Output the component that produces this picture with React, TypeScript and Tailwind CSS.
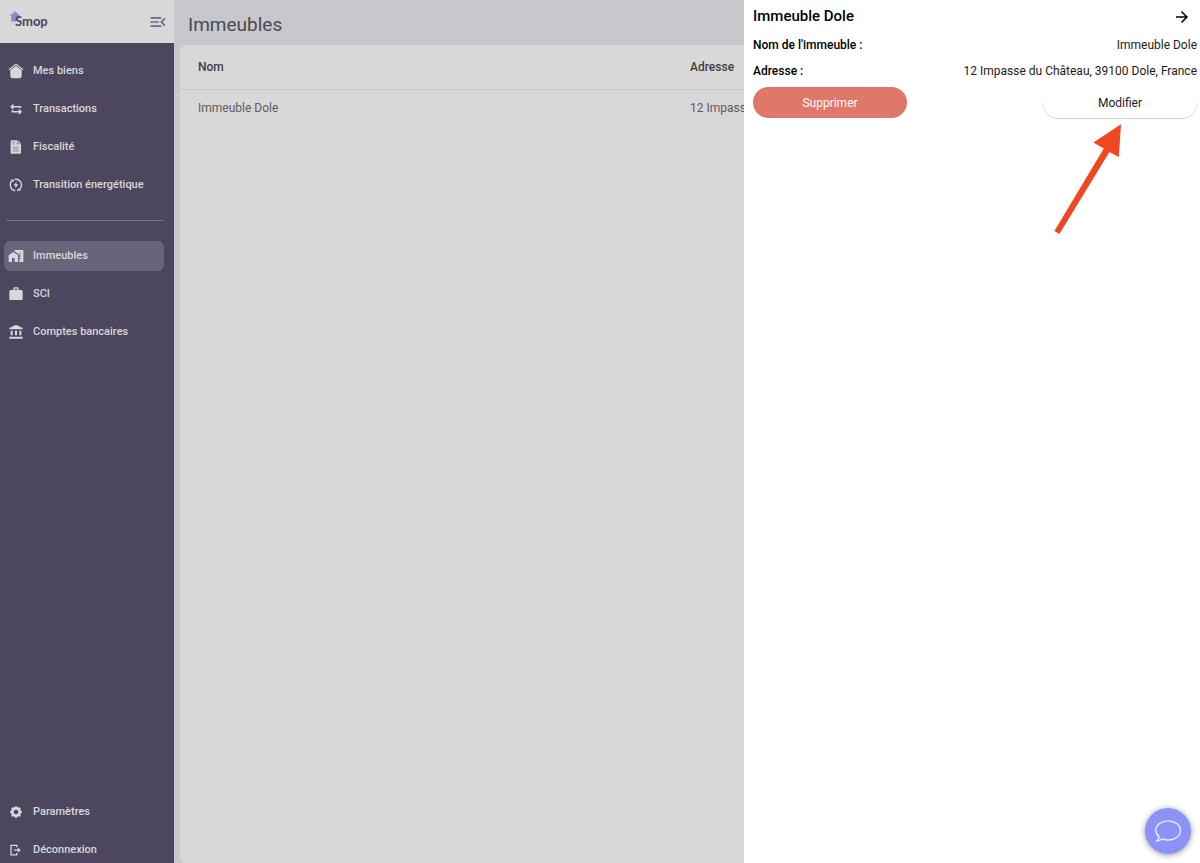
import React from 'react';
import {
  MdAccountBalance,
  MdArrowForward,
  MdMapsHomeWork,
  MdMenuOpen,
  MdWork,
} from 'react-icons/md';

const HomeIcon: React.FC = () => (
  <svg viewBox="0 0 16 16" className="size-4" fill="none" stroke="currentColor" aria-hidden="true">
    <path d="M.9 6.8 L8 1.3 L15.1 6.8" strokeWidth="1.1" />
    <path d="M2.3 7.2 L8 2.9 L13.7 7.2 V13 Q13.7 15.2 11.5 15.2 H4.5 Q2.3 15.2 2.3 13 Z" fill="currentColor" stroke="none" />
  </svg>
);

const TransferIcon: React.FC = () => (
  <svg viewBox="0 0 16 16" className="size-4" fill="none" stroke="currentColor" strokeWidth="1.4" aria-hidden="true">
    <path d="M12.4 7 V5.8 H3.6 M5.4 3.6 L3.2 5.8 L5.4 8" />
    <path d="M4.4 9 V10.8 H12.8 M10.8 8.6 L13 10.8 L10.8 13" />
  </svg>
);

const InvoiceIcon: React.FC = () => (
  <svg viewBox="0 0 16 16" className="size-4" aria-hidden="true">
    <path d="M3.4 1.2 H9.6 L13 4.6 V14 Q13 14.8 12.2 14.8 H3.4 Q2.6 14.8 2.6 14 V2 Q2.6 1.2 3.4 1.2 Z" fill="currentColor" />
    <path d="M9.4 1.4 V4.8 H12.8" fill="none" stroke="#4d465f" strokeWidth=".6" />
    <path d="M4.2 3.3 H7.2 M4.2 5 H6.2 M4.8 8.3 H10.8 M4.8 10.2 H10.8 M4.8 12.1 H10.8" stroke="#4d465f" strokeWidth=".5" />
  </svg>
);

const EnergyIcon: React.FC = () => (
  <svg viewBox="0 0 16 16" className="size-4" fill="none" stroke="currentColor" strokeWidth="1.4" aria-hidden="true">
    <path d="M6.6 2.4 A5.7 5.7 0 0 1 9 13.6 M7.2 13.7 A5.7 5.7 0 0 1 5 3.2" />
    <path d="M3.4 2.9 H5.4 V4.9 M10.8 11.4 V13.2 H12.6" strokeWidth="1" />
    <path d="M8.5 4.7 L5.6 8.7 H7.6 L7.1 11.4 L10.4 7.3 H8.3 Z" fill="currentColor" stroke="none" />
  </svg>
);

const GearIcon: React.FC = () => (
  <svg viewBox="0 0 16 16" className="size-4" fill="none" stroke="currentColor" aria-hidden="true">
    <circle cx="8" cy="8" r="3.6" strokeWidth="2.6" />
    <path
      d="M8 2.2 V4 M8 12 V13.8 M2.2 8 H4 M12 8 H13.8 M3.9 3.9 L5.2 5.2 M10.8 10.8 L12.1 12.1 M12.1 3.9 L10.8 5.2 M5.2 10.8 L3.9 12.1"
      strokeWidth="2.4"
    />
  </svg>
);

const LogoutIcon: React.FC = () => (
  <svg viewBox="0 0 16 16" className="size-4" fill="none" stroke="currentColor" strokeWidth="1.3" aria-hidden="true">
    <path d="M8.8 5.2 V3.4 H3 V12.8 H8.8 V11" />
    <path d="M6 8.1 H11.4" />
    <path d="M10 6 L12.4 8.1 L10 10.2 Z" fill="currentColor" strokeWidth=".6" />
  </svg>
);

const Logo: React.FC = () => (
  <a href="#accueil" aria-label="Smop" className="block">
    <svg viewBox="0 0 40 22" className="h-[22px] w-10">
      <path d="M1.2 4.4 L5 1.4 L9 4.4 V8 H6 V10.4 H1.2 Z" fill="#858ad6" />
      <path d="M.2 4.6 L4.8 .8 L9.4 4.6" fill="none" stroke="#77779a" strokeWidth=".9" />
      <text x="5" y="15" fontFamily="Lato, sans-serif" fontWeight="700" fontSize="13" fill="#4b4461">
        Smop
      </text>
      <circle cx="26.4" cy="13.2" r=".9" fill="#3f9b7c" />
    </svg>
  </a>
);

type Item = { label: string; href: string; icon: React.ReactNode; active?: boolean };

const mainItems: Item[] = [
  { label: 'Mes biens', href: '#biens', icon: <HomeIcon /> },
  { label: 'Transactions', href: '#transactions', icon: <TransferIcon /> },
  { label: 'Fiscalité', href: '#fiscalite', icon: <InvoiceIcon /> },
  { label: 'Transition énergétique', href: '#energie', icon: <EnergyIcon /> },
];

const assetItems: Item[] = [
  { label: 'Immeubles', href: '#immeubles', icon: <MdMapsHomeWork size={16} />, active: true },
  { label: 'SCI', href: '#sci', icon: <MdWork size={16} /> },
  { label: 'Comptes bancaires', href: '#comptes', icon: <MdAccountBalance size={16} /> },
];

const footerItems: Item[] = [
  { label: 'Paramètres', href: '#parametres', icon: <GearIcon /> },
  { label: 'Déconnexion', href: '#deconnexion', icon: <LogoutIcon /> },
];

const NavList: React.FC<{ items: Item[] }> = ({ items }) => (
  <ul className="flex flex-col gap-2 pl-1 pr-2.5">
    {items.map((item) => (
      <li key={item.label}>
        <a
          href={item.href}
          className={`flex h-[30px] items-center gap-[9px] rounded-md pl-1 text-[11px] leading-4 font-medium whitespace-nowrap ${
            item.active ? 'bg-[#6a647a]' : ''
          }`}
        >
          <span className="flex w-4 justify-center">{item.icon}</span>
          {item.label}
        </a>
      </li>
    ))}
  </ul>
);

const Sidebar: React.FC = () => (
  <aside className="flex w-[174px] shrink-0 flex-col bg-[#4d465f] text-[#d8d8d8]">
    <div className="flex h-[43px] items-center justify-between bg-[#d8d8d8] pl-2.5 pr-1.5">
      <Logo />
      <button type="button" aria-label="Réduire le menu" className="text-[#6f6a80]">
        <MdMenuOpen size={20} />
      </button>
    </div>
    <nav className="flex flex-1 flex-col pt-[13px]">
      <NavList items={mainItems} />
      <hr className="my-5 ml-1.5 mr-2.5 border-[#797388]" />
      <NavList items={assetItems} />
      <div className="mt-auto -mb-0.5">
        <NavList items={footerItems} />
      </div>
    </nav>
  </aside>
);

const rows = [{ nom: 'Immeuble Dole', adresse: '12 Impasse du Château, 39100 Dole, France' }];

const Buildings: React.FC = () => (
  <main className="flex min-w-0 flex-1 flex-col overflow-hidden bg-[#c8c7cd] pl-1.5">
    <h1 className="flex h-[45px] items-center pl-2 pt-1.5 text-[19px] text-[#4a4a4d]">Immeubles</h1>
    <div className="flex-1 rounded-l-md bg-[#d8d8d8]">
      <table className="w-full table-fixed text-left text-xs">
        <thead>
          <tr className="h-11 border-b border-[#c8c8c9] text-[#404040]">
            <th className="w-[492px] pl-[18px] font-medium">Nom</th>
            <th className="pl-[18px] font-medium">Adresse</th>
          </tr>
        </thead>
        <tbody>
          {rows.map((row) => (
            <tr key={row.nom} className="h-[38px] text-[#5c5c5c]">
              <td className="pl-[18px]">{row.nom}</td>
              <td className="overflow-hidden pl-[18px] whitespace-nowrap">{row.adresse}</td>
            </tr>
          ))}
        </tbody>
      </table>
    </div>
  </main>
);

const DetailPanel: React.FC = () => (
  <section className="relative w-[38%] shrink-0 bg-white pl-[9px] pr-[3px] text-xs text-[#1c1c1c]">
    <div className="flex h-[34px] items-center justify-between pr-1.5 text-black">
      <h2 className="text-[15px] font-medium">Immeuble Dole</h2>
      <button type="button" aria-label="Fermer">
        <MdArrowForward size={18} />
      </button>
    </div>
    <dl className="flex flex-col">
      <div className="flex h-[22px] items-center justify-between">
        <dt className="font-medium text-black">Nom de l'immeuble :</dt>
        <dd>Immeuble Dole</dd>
      </div>
      <div className="flex h-[30px] items-center justify-between">
        <dt className="font-medium text-black">Adresse :</dt>
        <dd>12 Impasse du Château, 39100 Dole, France</dd>
      </div>
    </dl>
    <div className="mt-px flex justify-between">
      <button type="button" className="h-[31px] w-[154px] rounded-full bg-[#df776a] text-white">
        Supprimer
      </button>
      <button
        type="button"
        className="h-[31px] w-[154px] rounded-full bg-white shadow-[0_1px_1px_rgba(0,0,0,0.18)]"
      >
        Modifier
      </button>
    </div>
    {/* Pointer to the edit button */}
    <svg viewBox="0 0 70 114" className="absolute right-[77px] top-[122px] h-[114px] w-[70px]" aria-hidden="true">
      <path d="M68 2.2 L65.8 35 L56.4 30 L6.4 112 L1.4 109 L50.8 26.6 L40.4 20.4 Z" fill="#f04720" />
    </svg>
  </section>
);

const ChatButton: React.FC = () => (
  <button
    type="button"
    aria-label="Ouvrir la discussion"
    className="fixed bottom-[9px] right-[9px] flex size-[46px] items-center justify-center rounded-full bg-[#8b92f8] shadow-[0_1px_6px_rgba(0,0,0,0.4)]"
  >
    <svg viewBox="0 0 28 24" className="h-6 w-7" fill="none" stroke="#e9eaff" strokeWidth="1.4" strokeLinejoin="round">
      <path d="M5.2 17.6 C3 15.8 1.8 13.8 1.8 11.4 C1.8 6 7.3 1.9 14.2 1.9 C21.1 1.9 26.4 6 26.4 11.4 C26.4 16.8 21.1 21 14.2 21 C11.8 21 9.7 20.6 8 19.8 C6.5 21.2 4.8 22 2.4 22.2 C4 20.8 5 19.4 5.2 17.6 Z" />
    </svg>
  </button>
);

const App: React.FC = () => {
  return (
    <div className="flex min-h-screen font-['Roboto',sans-serif]">
      <Sidebar />
      <Buildings />
      <DetailPanel />
      <ChatButton />
    </div>
  );
};

export default App;
